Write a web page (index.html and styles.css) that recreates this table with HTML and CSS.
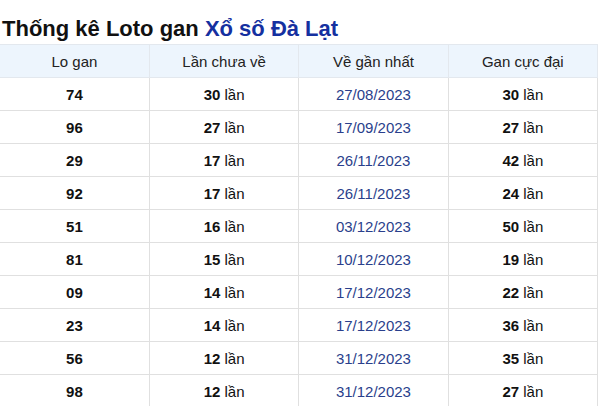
FILE: index.html
```html
<!DOCTYPE html>
<html lang="vi">
<head>
<meta charset="utf-8">
<link rel="stylesheet" href="styles.css">
</head>
<body>
<h2 class="title">Thống kê Loto gan <span class="title-blue">Xổ số Đà Lạt</span></h2>
<table class="gan">
  <thead>
    <tr><th>Lo gan</th><th>Lần chưa về</th><th>Về gần nhất</th><th>Gan cực đại</th></tr>
  </thead>
  <tbody>
    <tr><td><b>74</b></td><td><b>30</b> lần</td><td class="date">27/08/2023</td><td><b>30</b> lần</td></tr>
    <tr><td><b>96</b></td><td><b>27</b> lần</td><td class="date">17/09/2023</td><td><b>27</b> lần</td></tr>
    <tr><td><b>29</b></td><td><b>17</b> lần</td><td class="date">26/11/2023</td><td><b>42</b> lần</td></tr>
    <tr><td><b>92</b></td><td><b>17</b> lần</td><td class="date">26/11/2023</td><td><b>24</b> lần</td></tr>
    <tr><td><b>51</b></td><td><b>16</b> lần</td><td class="date">03/12/2023</td><td><b>50</b> lần</td></tr>
    <tr><td><b>81</b></td><td><b>15</b> lần</td><td class="date">10/12/2023</td><td><b>19</b> lần</td></tr>
    <tr><td><b>09</b></td><td><b>14</b> lần</td><td class="date">17/12/2023</td><td><b>22</b> lần</td></tr>
    <tr><td><b>23</b></td><td><b>14</b> lần</td><td class="date">17/12/2023</td><td><b>36</b> lần</td></tr>
    <tr><td><b>56</b></td><td><b>12</b> lần</td><td class="date">31/12/2023</td><td><b>35</b> lần</td></tr>
    <tr><td><b>98</b></td><td><b>12</b> lần</td><td class="date">31/12/2023</td><td><b>27</b> lần</td></tr>
  </tbody>
</table>
</body>
</html>
```
FILE: styles.css
```css
html, body {
  margin: 0;
  padding: 0;
  background: #fff;
  font-family: "Liberation Sans", Arial, sans-serif;
  color: #111;
}
.title {
  margin: 0;
  padding: 14px 0 0 2px;
  height: 44px;
  box-sizing: border-box;
  font-size: 22px;
  line-height: 30px;
  font-weight: bold;
  color: #111;
  white-space: nowrap;
}
.title-blue {
  color: #1530a0;
}
.gan {
  border-collapse: collapse;
  width: 598px;
  table-layout: fixed;
}
.gan th, .gan td {
  height: 32px;
  padding: 0;
  text-align: center;
  font-size: 15px;
  border: 1px solid #e0e0e0;
}
.gan th {
  background: #edf5fd;
  font-weight: normal;
  color: #222;
  border-color: #e3e8ee;
}
.gan tr > :first-child {
  border-left: none;
}
.gan td b {
  color: #111;
}
.gan td.date {
  color: #2a3f8c;
}
```
